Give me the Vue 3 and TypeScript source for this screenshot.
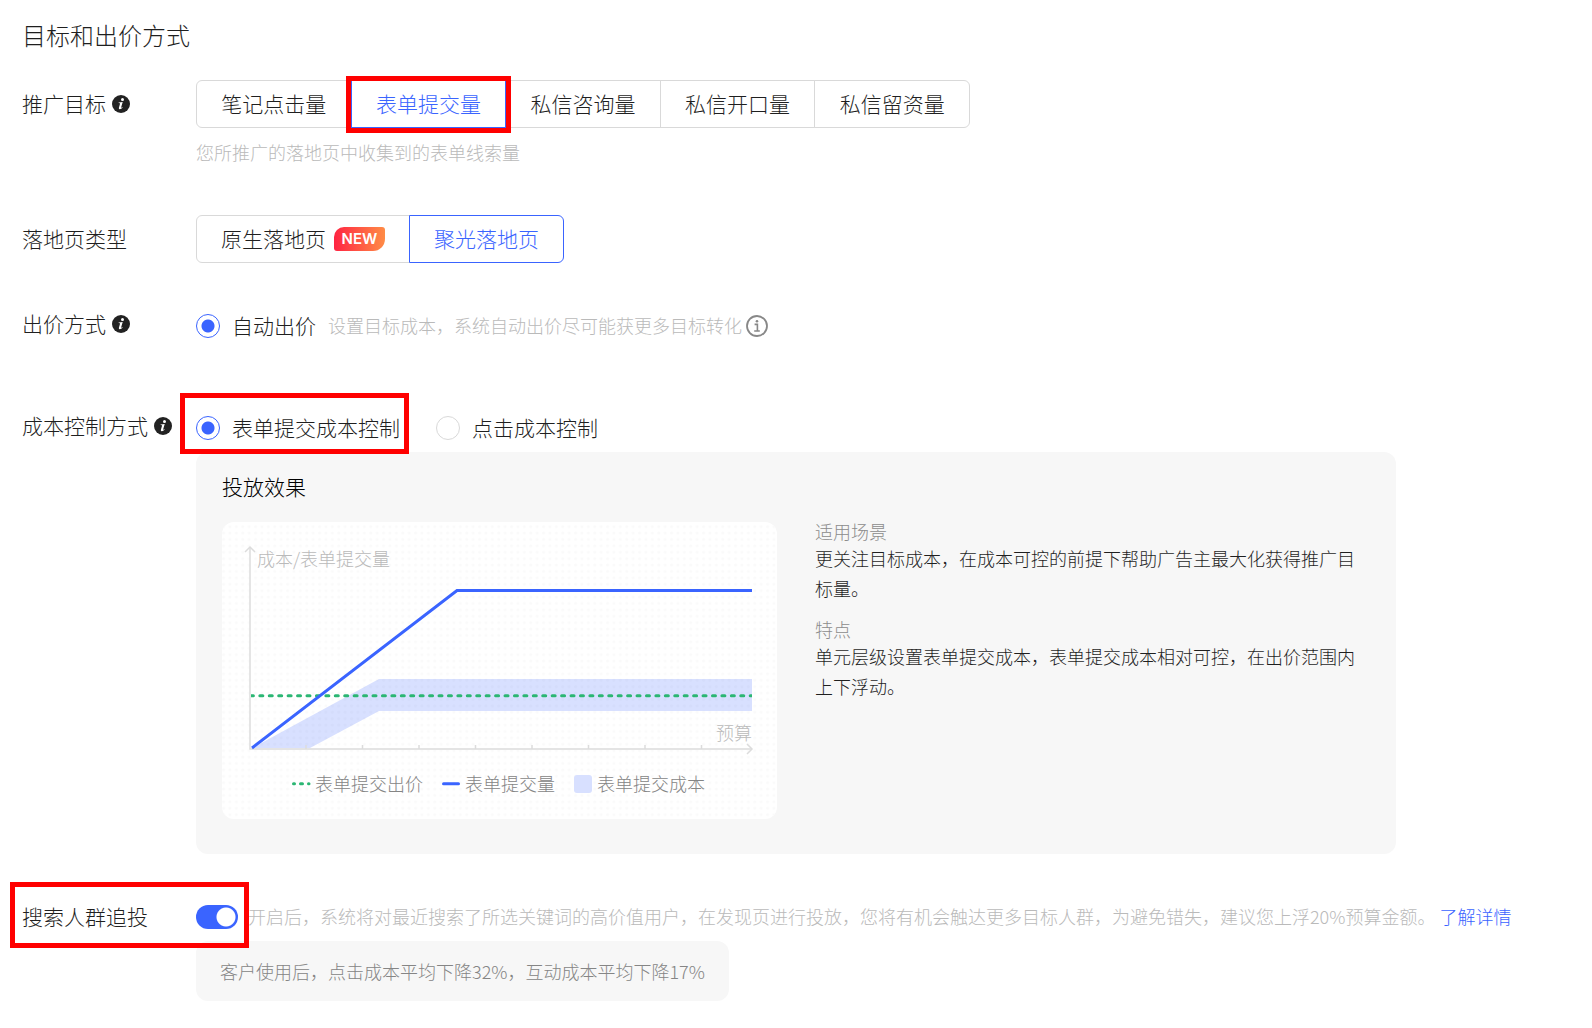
<script setup lang="ts">
import { ref } from 'vue'

interface Goal {
  value: string
  label: string
}

const goals: Goal[] = [
  { value: 'click', label: '笔记点击量' },
  { value: 'form', label: '表单提交量' },
  { value: 'consult', label: '私信咨询量' },
  { value: 'open', label: '私信开口量' },
  { value: 'lead', label: '私信留资量' },
]

const goal = ref<string>('form')
const landing = ref<string>('spotlight')
const bid = ref<string>('auto')
const cost = ref<string>('form')
const follow = ref<boolean>(true)

const ticks: number[] = [84, 140.5, 197, 253.5, 310, 366.5, 423, 479.5]
</script>

<template>
  <main class="page" lang="zh-CN">
    <h1 class="title">目标和出价方式</h1>

    <section class="row row-goal">
      <div class="label tall">
        推广目标
        <svg class="info" viewBox="0 0 18 18" aria-hidden="true">
          <circle cx="9" cy="9" r="9" fill="#222" />
          <circle cx="10.5" cy="4.5" r="1.5" fill="#fff" />
          <path d="M6.6 7.6L10.7 6.9L9.1 12.5Q9.1 13 10.6 12.2L10.8 12.6Q9 14.4 7.6 14.2Q6.6 14 6.9 12.7L8.1 8.4Q8.1 8 6.6 8.1Z" fill="#fff" />
        </svg>
      </div>
      <div class="content">
        <div class="segment goals">
          <button
            v-for="g in goals"
            :key="g.value"
            type="button"
            :class="{ active: goal === g.value, marked: g.value === 'form' }"
            @click="goal = g.value"
          >{{ g.label }}</button>
        </div>
        <p class="hint under">您所推广的落地页中收集到的表单线索量</p>
      </div>
    </section>

    <section class="row row-landing">
      <div class="label tall">落地页类型</div>
      <div class="content">
        <div class="segment">
          <button type="button" :class="{ active: landing === 'native' }" @click="landing = 'native'">
            原生落地页<span class="badge">NEW</span>
          </button>
          <button type="button" :class="{ active: landing === 'spotlight' }" @click="landing = 'spotlight'">聚光落地页</button>
        </div>
      </div>
    </section>

    <section class="row row-bid">
      <div class="label">
        出价方式
        <svg class="info" viewBox="0 0 18 18" aria-hidden="true">
          <circle cx="9" cy="9" r="9" fill="#222" />
          <circle cx="10.5" cy="4.5" r="1.5" fill="#fff" />
          <path d="M6.6 7.6L10.7 6.9L9.1 12.5Q9.1 13 10.6 12.2L10.8 12.6Q9 14.4 7.6 14.2Q6.6 14 6.9 12.7L8.1 8.4Q8.1 8 6.6 8.1Z" fill="#fff" />
        </svg>
      </div>
      <div class="content">
        <div class="line">
          <label class="radio"><input v-model="bid" type="radio" name="bid" value="auto" />自动出价</label>
          <span class="hint after">设置目标成本，系统自动出价尽可能获更多目标转化</span>
          <svg class="info-outline" viewBox="0 0 22 22" aria-hidden="true">
            <circle cx="11" cy="11" r="10" fill="none" stroke="#888" stroke-width="1.8" />
            <circle cx="11" cy="6.2" r="1.3" fill="#888" />
            <path d="M8.6 9.4H11.4V16M8.2 16h5.6" fill="none" stroke="#888" stroke-width="1.6" />
          </svg>
        </div>
      </div>
    </section>

    <section class="row row-cost">
      <div class="label">
        成本控制方式
        <svg class="info" viewBox="0 0 18 18" aria-hidden="true">
          <circle cx="9" cy="9" r="9" fill="#222" />
          <circle cx="10.5" cy="4.5" r="1.5" fill="#fff" />
          <path d="M6.6 7.6L10.7 6.9L9.1 12.5Q9.1 13 10.6 12.2L10.8 12.6Q9 14.4 7.6 14.2Q6.6 14 6.9 12.7L8.1 8.4Q8.1 8 6.6 8.1Z" fill="#fff" />
        </svg>
      </div>
      <div class="content">
        <div class="line options">
          <label class="radio marked"><input v-model="cost" type="radio" name="cost" value="form" />表单提交成本控制</label>
          <label class="radio"><input v-model="cost" type="radio" name="cost" value="click" />点击成本控制</label>
        </div>
        <div class="panel">
          <h2>投放效果</h2>
          <div class="panel-body">
            <svg class="chart" viewBox="0 0 555 297" role="img" aria-label="投放效果">
              <defs>
                <pattern id="dots" width="6.4" height="6.4" patternUnits="userSpaceOnUse">
                  <circle cx="1.6" cy="4.6" r="1.5" fill="#fafafa" />
                </pattern>
                <clipPath id="plot"><rect x="29" y="20" width="501" height="220" /></clipPath>
              </defs>
              <rect width="555" height="297" fill="#fff" />
              <rect width="555" height="297" fill="url(#dots)" />
              <path d="M30 226L157 157H530V189H157L88 226Z" fill="#3a64ff" fill-opacity="0.2" />
              <g fill="none" stroke="#dcdcdc" stroke-width="1.5">
                <path d="M28 25V227H530" />
                <path d="M23 30L28 25L33 30M525 222L530 227L525 232" />
                <path v-for="t in ticks" :key="t" :d="`M${t} 223V227`" />
              </g>
              <g clip-path="url(#plot)" fill="none" stroke-width="3">
                <path d="M28.4 173.7H534" stroke="#2bb673" stroke-linecap="round" stroke-dasharray="3 6.43" />
              </g>
              <path d="M30 226L235 68.5H530" fill="none" stroke="#3a64ff" stroke-width="3" />
              <g class="axis-text">
                <text x="35" y="44">成本/表单提交量</text>
                <text x="494" y="218">预算</text>
              </g>
              <path d="M71.5 261.7H87" fill="none" stroke="#2bb673" stroke-width="3" stroke-linecap="round" stroke-dasharray="1 6 2 6" />
              <path d="M221.5 261.7H236.5" fill="none" stroke="#3a64ff" stroke-width="3" stroke-linecap="round" />
              <rect x="352" y="253" width="18" height="18" rx="3" fill="#d8e0ff" />
              <g class="legend-text">
                <text x="93" y="269">表单提交出价</text>
                <text x="243" y="269">表单提交量</text>
                <text x="375" y="269">表单提交成本</text>
              </g>
            </svg>
            <dl class="notes">
              <dt>适用场景</dt>
              <dd>更关注目标成本，在成本可控的前提下帮助广告主最大化获得推广目标量。</dd>
              <dt>特点</dt>
              <dd>单元层级设置表单提交成本，表单提交成本相对可控，在出价范围内上下浮动。</dd>
            </dl>
          </div>
        </div>
      </div>
    </section>

    <section class="row row-follow">
      <label class="label tall" for="follow">搜索人群追投</label>
      <div class="content">
        <div class="line">
          <input id="follow" v-model="follow" class="switch" type="checkbox" role="switch" />
          <p class="hint">开启后，系统将对最近搜索了所选关键词的高价值用户，在发现页进行投放，您将有机会触达更多目标人群，为避免错失，建议您上浮20%预算金额。</p>
          <a href="#">了解详情</a>
        </div>
        <p class="result">客户使用后，点击成本平均下降32%，互动成本平均下降17%</p>
      </div>
      <span class="mark" aria-hidden="true"></span>
    </section>
  </main>
</template>

<style>
body {
  margin: 0;
  background: #fff;
}
</style>

<style scoped>
.page {
  box-sizing: border-box;
  padding: 17px 22px 27px;
  font-family: "Noto Sans CJK SC Light", "Noto Sans CJK SC", sans-serif;
  font-weight: 300;
  font-size: 21px;
  color: #1f1f1f;
}
h1, h2, p, dl, dd {
  margin: 0;
  font-weight: inherit;
}
.title {
  font-size: 24px;
  line-height: 36px;
}
.row {
  position: relative;
  display: flex;
}
.row-goal { margin-top: 27px; }
.row-landing { margin-top: 50px; }
.row-bid { margin-top: 39px; }
.row-cost { margin-top: 54px; }
.row-follow { margin-top: 39px; }
.label {
  display: flex;
  align-items: center;
  gap: 6px;
  box-sizing: border-box;
  flex: none;
  width: 174px;
  height: 44px;
  padding-bottom: 2px;
}
.label.tall { height: 48px; }
.info {
  width: 18px;
  height: 18px;
  margin-top: 2px;
}
.content {
  flex: 1;
  min-width: 0;
}
.segment {
  display: flex;
}
.goals {
  width: 774px;
}
.goals button {
  flex: 1 0 auto;
}
.segment button {
  position: relative;
  display: flex;
  align-items: center;
  justify-content: center;
  box-sizing: border-box;
  height: 48px;
  padding: 0 24px 2px;
  border: 1px solid #d9d9d9;
  background: #fff;
  font: inherit;
  color: inherit;
  white-space: nowrap;
  cursor: pointer;
}
.segment button + button { margin-left: -1px; }
.segment button:first-child { border-radius: 6px 0 0 6px; }
.segment button:last-child { border-radius: 0 6px 6px 0; }
.segment button.active {
  z-index: 1;
  border-color: #3a64ff;
  color: #3a64ff;
}
.badge {
  margin: 2px 0 0 8px;
  width: 51px;
  border-radius: 10px 3px 12px 3px;
  background: linear-gradient(90deg, #ff2442, #ff8c46);
  color: #fff;
  font: 600 15px/24px Inter, "Liberation Sans", sans-serif;
  text-align: center;
}
.marked { position: relative; }
.segment .marked::after,
.radio.marked::after,
.mark {
  content: "";
  position: absolute;
  border: 5px solid #f00;
  pointer-events: none;
}
.segment .marked::after { inset: -5px -6px -6px; }
.radio.marked::after { inset: -11px -9px -2px -16px; z-index: 1; }
.mark {
  top: -11px;
  left: -12px;
  width: 229px;
  height: 56px;
}
.hint {
  font-size: 18px;
  line-height: 26px;
  color: #bababa;
}
.under { margin-top: 11px; }
.after { margin-left: 12px; }
.line {
  display: flex;
  align-items: center;
  height: 48px;
}
.line .hint,
.line a {
  padding-bottom: 2px;
}
.options { gap: 36px; }
.radio {
  display: flex;
  align-items: center;
  gap: 12px;
  box-sizing: border-box;
  height: 48px;
  padding-bottom: 2px;
  cursor: pointer;
}
.radio input {
  appearance: none;
  box-sizing: border-box;
  width: 24px;
  height: 24px;
  margin: 2px 0 0;
  border: 1px solid #d9d9d9;
  border-radius: 50%;
  background: #fff;
}
.radio input:checked {
  border-color: #3a64ff;
  background: radial-gradient(circle, #3a64ff 6px, #fff 7px);
}
.info-outline {
  width: 22px;
  height: 22px;
  margin-left: 4px;
}
.panel {
  box-sizing: border-box;
  max-width: 1200px;
  padding: 18px 24px 35px 26px;
  border-radius: 12px;
  background: #f7f7f7;
}
.panel h2 {
  font-size: 21px;
  line-height: 32px;
  color: #000;
}
.panel-body {
  display: flex;
  align-items: flex-start;
  gap: 38px;
  margin-top: 20px;
}
.chart {
  flex: none;
  width: 555px;
  height: 297px;
  border-radius: 12px;
}
.chart text { font-size: 18px; }
.axis-text { fill: #bababa; }
.legend-text { fill: #858585; }
.notes {
  flex: 1;
  margin-top: -3px;
  font-size: 18px;
}
.notes dt {
  line-height: 24px;
  color: #8c8c8c;
}
.notes dd { line-height: 30px; }
.notes dd + dt { margin-top: 14px; }
.switch {
  appearance: none;
  flex: none;
  width: 42px;
  height: 24px;
  margin: 0 10px 0 0;
  border-radius: 12px;
  background: radial-gradient(circle at 12px, #fff 9px, transparent 10px) #bfbfbf;
  cursor: pointer;
}
.switch:checked {
  background: radial-gradient(circle at 30px, #fff 9px, transparent 10px) #3a64ff;
}
.line a {
  margin-left: 4px;
  font-size: 18px;
  line-height: 26px;
  color: #3a64ff;
  text-decoration: none;
  white-space: nowrap;
}
.result {
  box-sizing: border-box;
  width: fit-content;
  padding: 16px 24px;
  border-radius: 12px;
  background: #f7f7f7;
  font-size: 18px;
  line-height: 28px;
  color: #858585;
}
</style>
